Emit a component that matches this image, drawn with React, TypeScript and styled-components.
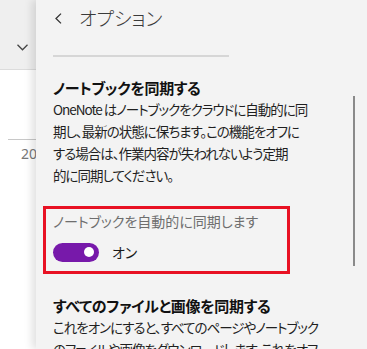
import React from "react";
import styled, { createGlobalStyle } from "styled-components";

const Global = createGlobalStyle`
  html, body { margin: 0; padding: 0; }
  body {
    width: 367px;
    height: 349px;
    overflow: hidden;
    background: #ffffff;
    font-family: "Noto Sans CJK JP", "Noto Sans", sans-serif;
    font-feature-settings: "palt";
  }
`;

const Page = styled.div`
  display: flex;
  width: 367px;
  height: 349px;
  overflow: hidden;
`;

const BackColumn = styled.div`
  width: 36px;
  flex: none;
  display: flex;
  flex-direction: column;
  overflow: hidden;
  background: #ffffff;
`;

const BackBar = styled.div`
  height: 70px;
  flex: none;
  background: #efefef;
  border-bottom: 1px solid #dcdcdc;
  display: flex;
  align-items: flex-end;
  padding: 0 0 18px 17px;
  box-sizing: border-box;
`;

const BackBody = styled.div`
  padding: 69px 0 0 8px;
`;

const BackRule = styled.div`
  height: 1px;
  background: #c8c8c8;
`;

const BackYear = styled.div`
  margin: 5px 0 0 13px;
  font-family: "Noto Sans", sans-serif;
  font-size: 14px;
  line-height: 18px;
  color: #777;
  white-space: nowrap;
`;

const Panel = styled.div`
  position: relative;
  flex: 1;
  background: #f3f3f3;
  box-shadow: -4px 0 8px rgba(0, 0, 0, 0.12);
  padding: 0 0 0 17px;
`;

const Header = styled.div`
  height: 36px;
  display: flex;
  align-items: center;
  gap: 17px;
  padding-left: 2px;
  color: #333;
`;

const Title = styled.div`
  font-size: 19px;
  font-weight: 300;
  color: #3a3a3a;
  line-height: 36px;
`;

const Separator = styled.div`
  width: 176px;
  height: 2px;
  margin-top: 19px;
  background: #d6d6d6;
`;

const Heading = styled.div<{ $top: number }>`
  margin-top: ${(p) => p.$top}px;
  font-size: 15px;
  font-weight: 700;
  line-height: 20px;
  letter-spacing: -0.3px;
  color: #111;
  white-space: nowrap;
`;

const Body = styled.div`
  font-size: 13.5px;
  letter-spacing: -1px;
  line-height: 22px;
  color: #1f1f1f;
  white-space: nowrap;
`;

const Highlight = styled.div`
  margin: 20px 0 0 -10px;
  width: 247px;
  height: 68px;
  box-sizing: border-box;
  border: 3px solid #e81123;
  padding: 1px 0 0 7px;
  display: flex;
  flex-direction: column;
`;

const Label = styled.div`
  font-size: 14px;
  line-height: 22px;
  color: #6e6e6e;
  white-space: nowrap;
`;

const ToggleRow = styled.div`
  margin-top: 10px;
  display: flex;
  align-items: center;
  gap: 13px;
`;

const Track = styled.div<{ $on: boolean }>`
  width: 46px;
  height: 19px;
  border-radius: 10px;
  background: ${(p) => (p.$on ? "#7719aa" : "#ffffff")};
  display: flex;
  align-items: center;
  justify-content: ${(p) => (p.$on ? "flex-end" : "flex-start")};
  padding: 0 5px;
  box-sizing: border-box;
`;

const Knob = styled.div`
  width: 10px;
  height: 10px;
  border-radius: 50%;
  background: #ffffff;
`;

const ToggleText = styled.div`
  font-size: 14px;
  line-height: 20px;
  color: #1a1a1a;
`;

const Scrollbar = styled.div`
  position: absolute;
  left: 317px;
  top: 96px;
  width: 2px;
  height: 170px;
  background: #8a8a8a;
`;

export default function App() {
  return (
    <>
      <Global />
      <Page>
        <BackColumn>
          <BackBar>
            <svg width="11" height="7" viewBox="0 0 11 7">
              <polyline points="0.5,0.8 5.5,5.8 10.5,0.8" fill="none" stroke="#444" strokeWidth="1.3" />
            </svg>
          </BackBar>
          <BackBody>
            <BackRule />
            <BackYear>20</BackYear>
          </BackBody>
        </BackColumn>
        <Panel>
          <Header>
            <svg width="7" height="11" viewBox="0 0 7 11">
              <polyline points="6,0.6 1,5.5 6,10.4" fill="none" stroke="#333" strokeWidth="1.3" />
            </svg>
            <Title>オプション</Title>
          </Header>
          <Separator />
          <Heading $top={21}>ノートブックを同期する</Heading>
          <Body>
            OneNote はノートブックをクラウドに自動的に同
            <br />
            期し、最新の状態に保ちます。この機能をオフに
            <br />
            する場合は、作業内容が失われないよう定期
            <br />
            的に同期してください。
          </Body>
          <Highlight>
            <Label>ノートブックを自動的に同期します</Label>
            <ToggleRow>
              <Track $on>
                <Knob />
              </Track>
              <ToggleText>オン</ToggleText>
            </ToggleRow>
          </Highlight>
          <Heading $top={22}>すべてのファイルと画像を同期する</Heading>
          <Body>
            これをオンにすると、すべてのページやノートブック
            <br />
            のファイルや画像をダウンロードします。これをオフ
          </Body>
          <Scrollbar />
        </Panel>
      </Page>
    </>
  );
}
